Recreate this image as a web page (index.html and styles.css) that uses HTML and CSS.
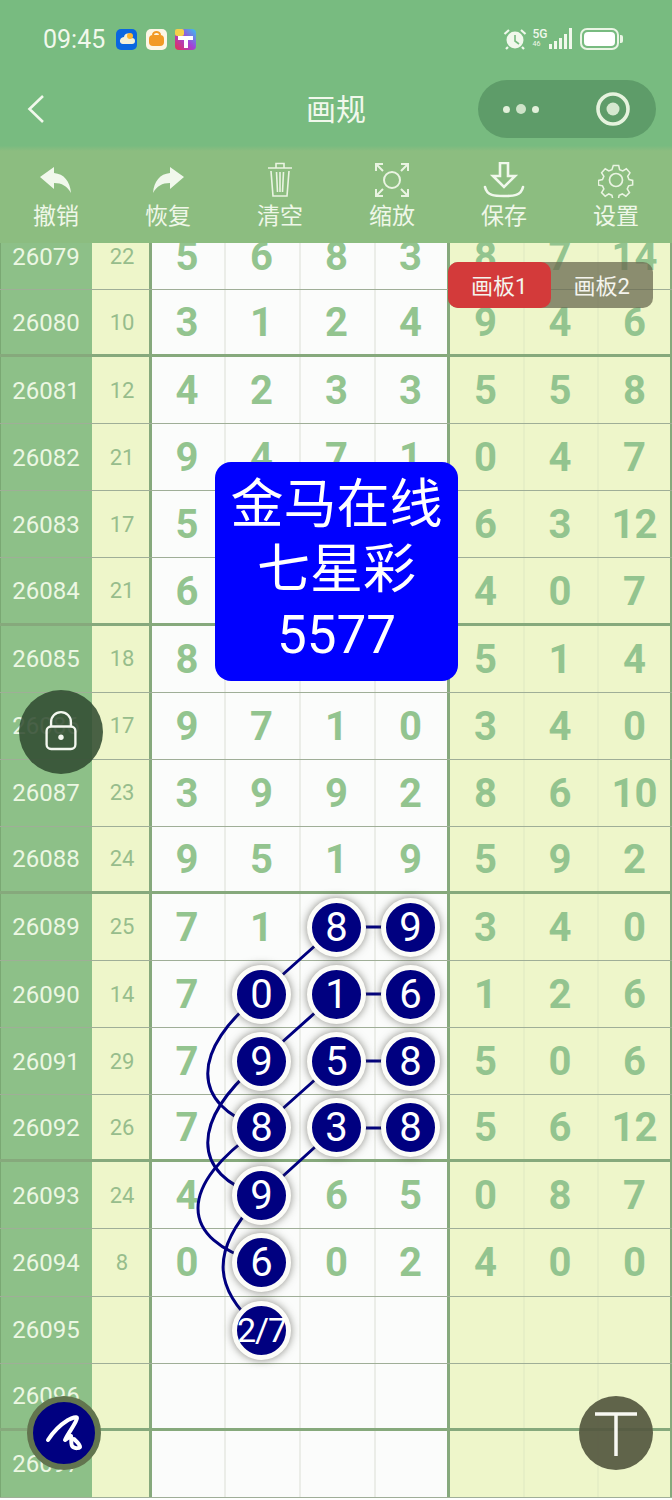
FILE: index.html
```html
<!DOCTYPE html>
<html lang="zh">
<head>
<meta charset="utf-8">
<title>画规</title>
<link rel="stylesheet" href="styles.css">
</head>
<body>
<div class="page">
  <header class="head">
    <div class="status">
      <span class="time">09:45</span>
      <svg class="app" viewBox="0 0 21 21"><rect width="21" height="21" rx="5" fill="#0a66e0"/><path d="M4 13a4 4 0 0 1 4-5 4 4 0 0 1 8 1 3 3 0 0 1 0 6H7a3 3 0 0 1-3-2z" fill="#f4f0d8"/><circle cx="14" cy="7" r="3" fill="#ffb52e"/></svg>
      <svg class="app" viewBox="0 0 21 21"><rect width="21" height="21" rx="5" fill="#fdf6e6"/><rect x="3" y="6" width="15" height="11" rx="4" fill="#f29a26"/><path d="M7 6a3.5 3 0 0 1 7 0" fill="none" stroke="#f29a26" stroke-width="2"/></svg>
      <svg class="app" viewBox="0 0 21 21"><defs><linearGradient id="mc" x1="0" y1="1" x2="1" y2="0"><stop offset="0" stop-color="#e8304f"/><stop offset=".5" stop-color="#a342d8"/><stop offset="1" stop-color="#36c3ee"/></linearGradient></defs><rect width="21" height="21" rx="4" fill="url(#mc)"/><rect x="0" y="0" width="9" height="7" rx="2" fill="#f4d04a"/><path d="M3 7h15v4h-5v8H9v-8H3z" fill="#fff"/></svg>
      <span class="spacer"></span>
      <svg class="alarm" viewBox="0 0 24 22"><circle cx="12" cy="12" r="8.5" fill="#f1f8ec"/><path d="M12 7v6l4 3" stroke="#78bb80" stroke-width="1.6" fill="none"/><path d="M1.5 6 6 2M22.5 6 18 2M5 19l-2 2M19 19l2 2" stroke="#f1f8ec" stroke-width="2.2" fill="none"/></svg>
      <span class="net"><span class="net-g">5G</span><span class="net-s">46</span></span>
      <span class="bars"><i class="b1"></i><i class="b2"></i><i class="b3"></i><i class="b4"></i><i class="b5"></i></span>
      <span class="battery"><span class="batt-fill"></span></span><span class="batt-cap"></span>
    </div>
    <nav class="nav">
      <svg class="back" viewBox="0 0 18 28"><path d="M16 1 2.5 14 16 27" fill="none" stroke="#f1f8ec" stroke-width="2.6"/></svg>
      <h1 class="title">画规</h1>
      <div class="capsule">
        <span class="dots"><i></i><i class="big"></i><i></i></span>
        <svg class="target" viewBox="0 0 36 36"><circle cx="18" cy="18" r="15" fill="none" stroke="#e6f3de" stroke-width="3.6"/><circle cx="18" cy="18" r="6.5" fill="#d5e8cf"/></svg>
      </div>
    </nav>
  </header>

  <section class="tools">
    <div class="tool">
      <svg class="ticon" viewBox="0 0 36 36"><path d="M2 15 16 5v6c10 1 16 8 17 20-4-7-9-10-17-10v6z" fill="#f1f8ec"/></svg>
      <span>撤销</span>
    </div>
    <div class="tool">
      <svg class="ticon" viewBox="0 0 36 36"><path d="M34 15 20 5v6C10 12 4 19 3 31c4-7 9-10 17-10v6z" fill="#f1f8ec"/></svg>
      <span>恢复</span>
    </div>
    <div class="tool">
      <svg class="ticon" viewBox="0 0 36 36" fill="none" stroke="#eaf4e2" stroke-width="1.6"><path d="M6 6h24M9 9l2 25h14l2-25M14 6V1.500h8V6M14.500 10l1 20M18 10v20M21.500 10l-1 20"/></svg>
      <span>清空</span>
    </div>
    <div class="tool">
      <svg class="ticon" viewBox="0 0 36 36" fill="none" stroke="#eaf4e2" stroke-width="2"><circle cx="18" cy="18" r="8"/><path d="M2 9V2h7M2 2l7 7M27 2h7v7M34 2l-7 7M2 27v7h7M2 34l7-7M34 27v7h-7M34 34l-7-7"/></svg>
      <span>缩放</span>
    </div>
    <div class="tool">
      <svg class="ticon wide" viewBox="0 0 42 36" fill="none" stroke="#f1f8ec" stroke-width="2.600"><path d="M17 1h8v13h7L21 25 10 14h7z"/><path d="M2 25c2 9 10 9 19 9s17 0 19-9" stroke-linecap="round"/></svg>
      <span>保存</span>
    </div>
    <div class="tool">
      <svg class="ticon" viewBox="0 0 36 36" fill="none" stroke="#eaf4e2" stroke-width="1.700"><circle cx="18" cy="18" r="6.500"/><path d="M15 2h6l1 4.500 3.500 1.500 4-2.500 4 4.500-2.500 4 1.500 3.500 4 1v-0 5l-4.500 1-1.500 3.500 2.500 4-4 4-4-2.500-3.500 1.500-1 4.500h-6l-1-4.500-3.500-1.500-4 2.500-4-4 2.500-4-1.500-3.500-4.500-1v-5l4.500-1 1.500-3.500-2.500-4 4-4.500 4 2.500 3.500-1.500z" transform="translate(1.800 1.800) scale(.9)"/></svg>
      <span>设置</span>
    </div>
  </section>

  <main class="board">
    <div class="rows">
      <div class="row"><div class="id">26079</div><div class="sum">22</div><div class="n first">5</div><div class="n">6</div><div class="n">8</div><div class="n last">3</div><div class="n r">8</div><div class="n r">7</div><div class="n r">14</div></div>
      <div class="row major"><div class="id">26080</div><div class="sum">10</div><div class="n first">3</div><div class="n">1</div><div class="n">2</div><div class="n last">4</div><div class="n r">9</div><div class="n r">4</div><div class="n r">6</div></div>
      <div class="row"><div class="id">26081</div><div class="sum">12</div><div class="n first">4</div><div class="n">2</div><div class="n">3</div><div class="n last">3</div><div class="n r">5</div><div class="n r">5</div><div class="n r">8</div></div>
      <div class="row"><div class="id">26082</div><div class="sum">21</div><div class="n first">9</div><div class="n">4</div><div class="n">7</div><div class="n last">1</div><div class="n r">0</div><div class="n r">4</div><div class="n r">7</div></div>
      <div class="row"><div class="id">26083</div><div class="sum">17</div><div class="n first">5</div><div class="n"></div><div class="n"></div><div class="n last"></div><div class="n r">6</div><div class="n r">3</div><div class="n r">12</div></div>
      <div class="row major"><div class="id">26084</div><div class="sum">21</div><div class="n first">6</div><div class="n"></div><div class="n"></div><div class="n last"></div><div class="n r">4</div><div class="n r">0</div><div class="n r">7</div></div>
      <div class="row"><div class="id">26085</div><div class="sum">18</div><div class="n first">8</div><div class="n"></div><div class="n"></div><div class="n last"></div><div class="n r">5</div><div class="n r">1</div><div class="n r">4</div></div>
      <div class="row"><div class="id">26086</div><div class="sum">17</div><div class="n first">9</div><div class="n">7</div><div class="n">1</div><div class="n last">0</div><div class="n r">3</div><div class="n r">4</div><div class="n r">0</div></div>
      <div class="row"><div class="id">26087</div><div class="sum">23</div><div class="n first">3</div><div class="n">9</div><div class="n">9</div><div class="n last">2</div><div class="n r">8</div><div class="n r">6</div><div class="n r">10</div></div>
      <div class="row major"><div class="id">26088</div><div class="sum">24</div><div class="n first">9</div><div class="n">5</div><div class="n">1</div><div class="n last">9</div><div class="n r">5</div><div class="n r">9</div><div class="n r">2</div></div>
      <div class="row"><div class="id">26089</div><div class="sum">25</div><div class="n first">7</div><div class="n">1</div><div class="n"><span class="ball">8</span></div><div class="n last"><span class="ball">9</span></div><div class="n r">3</div><div class="n r">4</div><div class="n r">0</div></div>
      <div class="row"><div class="id">26090</div><div class="sum">14</div><div class="n first">7</div><div class="n"><span class="ball">0</span></div><div class="n"><span class="ball">1</span></div><div class="n last"><span class="ball">6</span></div><div class="n r">1</div><div class="n r">2</div><div class="n r">6</div></div>
      <div class="row"><div class="id">26091</div><div class="sum">29</div><div class="n first">7</div><div class="n"><span class="ball">9</span></div><div class="n"><span class="ball">5</span></div><div class="n last"><span class="ball">8</span></div><div class="n r">5</div><div class="n r">0</div><div class="n r">6</div></div>
      <div class="row major"><div class="id">26092</div><div class="sum">26</div><div class="n first">7</div><div class="n"><span class="ball">8</span></div><div class="n"><span class="ball">3</span></div><div class="n last"><span class="ball">8</span></div><div class="n r">5</div><div class="n r">6</div><div class="n r">12</div></div>
      <div class="row"><div class="id">26093</div><div class="sum">24</div><div class="n first">4</div><div class="n"><span class="ball">9</span></div><div class="n">6</div><div class="n last">5</div><div class="n r">0</div><div class="n r">8</div><div class="n r">7</div></div>
      <div class="row"><div class="id">26094</div><div class="sum">8</div><div class="n first">0</div><div class="n"><span class="ball">6</span></div><div class="n">0</div><div class="n last">2</div><div class="n r">4</div><div class="n r">0</div><div class="n r">0</div></div>
      <div class="row"><div class="id">26095</div><div class="sum"></div><div class="n first"></div><div class="n"><span class="ball small">2/7</span></div><div class="n"></div><div class="n last"></div><div class="n r"></div><div class="n r"></div><div class="n r"></div></div>
      <div class="row major"><div class="id">26096</div><div class="sum"></div><div class="n first"></div><div class="n"></div><div class="n"></div><div class="n last"></div><div class="n r"></div><div class="n r"></div><div class="n r"></div></div>
      <div class="row"><div class="id">26097</div><div class="sum"></div><div class="n first"></div><div class="n"></div><div class="n"></div><div class="n last"></div><div class="n r"></div><div class="n r"></div><div class="n r"></div></div>
    </div>
    <svg class="links" viewBox="0 243 672 1257" fill="none" stroke="#000080" stroke-width="3">
      <path d="M336 927 261 994M336 994 261 1061M336 1061 261 1128M336 1128 261 1196"/>
      <path d="M336 927H410M336 994H410M336 1061H410M336 1128H410"/>
      <path d="M261 994C190 1050 190 1105 261 1128"/>
      <path d="M261 1061C190 1120 190 1175 261 1196"/>
      <path d="M261 1128C177 1185 177 1240 261 1263"/>
      <path d="M261 1196C208 1250 213 1290 261 1330"/>
    </svg>
  </main>

  <aside class="notice">金马在线<br>七星彩<br>5577</aside>
  <div class="tabs"><span class="tab on">画板1</span><span class="tab">画板2</span></div>
  <button class="fab lock"><svg viewBox="0 0 40 46" fill="none" stroke="#f4f8f0" stroke-width="2.600"><path d="M9 18V13a11 11 0 0 1 22 0v5"/><rect x="4" y="18" width="32" height="25" rx="5"/><circle cx="20" cy="30" r="3" fill="#f4f8f0" stroke="none"/></svg></button>
  <button class="fab pen"><svg viewBox="0 0 62 62" fill="none" stroke="#fff" stroke-width="4" stroke-linecap="round" stroke-linejoin="round"><path d="M15 38C20 30 27 23 35 18 39 16 44 14 44 16 44 20 35 31 32 38 35 36 37 34 38 34 39 37 37 43 40 45 43 47 46 46 47 45 47 42 43 39 41 37"/></svg></button>
  <button class="fab text"><svg viewBox="0 0 74 74" fill="none" stroke="#f8f8f2" stroke-width="3.500"><path d="M16 18H58M37 18V60"/></svg></button>
</div>
</body>
</html>
```
FILE: styles.css
```css
* { box-sizing: border-box; }
html, body { margin: 0; padding: 0; }
body { font-family: Roboto, "Noto Sans CJK SC", sans-serif; background: #fff; }
.page { position: relative; width: 672px; height: 1500px; overflow: hidden; display: flex; flex-direction: column; }

.head { height: 146px; background: #78bb80; color: #f1f8ec; flex: none; }
.status { height: 72px; padding: 6px 49px 0 43px; display: flex; align-items: center; }
.time { font-size: 25px; margin-right: 8px; width: 65px; }
.app { width: 21px; height: 21px; margin-right: 8.500px; }
.spacer { flex: 1; }
.alarm { width: 24px; height: 22px; margin-right: 6px; }
.net { width: 16px; display: flex; flex-direction: column; line-height: 1; margin-top: -2px; }
.net-g { font-size: 12px; font-weight: 500; }
.net-s { font-size: 7px; margin-top: 1px; }
.bars { display: flex; align-items: flex-end; gap: 1.500px; height: 21px; margin-right: 8px; margin-top: -2px; }
.bars i { display: block; width: 3.500px; background: #f1f8ec; }
.b1 { height: 5px; } .b2 { height: 8px; } .b3 { height: 11px; } .b4 { height: 15px; } .b5 { height: 21px; }
.battery { width: 39px; height: 22px; border: 2px solid #eaf5e4; border-radius: 7px; padding: 2px; display: flex; }
.batt-fill { flex: 1; background: #fff; border-radius: 4px; }
.batt-cap { width: 3px; height: 8px; background: #eaf5e4; border-radius: 0 2px 2px 0; margin-left: 1px; }

.nav { height: 74px; display: grid; grid-template-columns: 1fr auto 1fr; align-items: center; padding: 0 16px; }
.back { width: 18px; height: 28px; margin-left: 11px; }
.title { margin: 0; font-size: 30px; line-height: 34px; font-weight: 400; color: #f1f8ec; margin-top: 2px; }
.capsule { justify-self: end; width: 178px; height: 58px; border-radius: 29px; background: #5e9c69; display: flex; align-items: center; padding: 0 0 0 25px; }
.dots { display: flex; align-items: center; gap: 6px; width: 92px; }
.dots i { display: block; width: 7px; height: 7px; border-radius: 50%; background: #e2f0da; }
.dots i.big { width: 10px; height: 10px; background: #cfe3c9; }
.target { width: 36px; height: 36px; }

.tools { height: 97px; flex: none; display: grid; grid-template-columns: repeat(6, 112px); background: linear-gradient(#79bb80 0, #8cbd80 5px); padding-top: 16px; }
.tool { display: flex; flex-direction: column; align-items: center; color: #eff7e8; font-size: 23px; line-height: 34px; gap: 2px; }
.ticon { width: 36px; height: 36px; display: block; }
.ticon.wide { width: 42px; }

.board { position: relative; flex: 1; overflow: hidden; background: #fff; }
.rows { margin-top: -20px; }
.row { display: grid; grid-template-columns: 92px 60px 72px 75px 75px 76px 73px 74px 75px; height: 67.100px; border-bottom: 1.500px solid #9fae97; }
.row.major { border-bottom: 3px solid #86a97c; }
.id { background: #8dc088; color: #ecf7e3; font-size: 24px; display: flex; align-items: center; justify-content: center; padding: 1px 1px 0 0; border-left: 1px solid #7aa873; }
.sum { background: #eef6ca; color: #97bd8c; font-size: 22px; display: flex; align-items: center; justify-content: center; border-right: 3px solid #86a97c; padding-left: 3px; }
.n { background: #fbfcfb; color: #93c48f; font-size: 40px; font-weight: 700; display: flex; align-items: center; justify-content: center; border-left: 2px solid #ebede8; padding: 1px 2px 0 0; }
.n.first { border-left: 0; }
.n.last { border-right: 3px solid #86a97c; }
.n.r { background: #eef6ca; border-left: 2px solid #e6efc6; }
.n.last + .n.r { border-left: 0; }
.n.r:last-child { border-right: 2px solid #86a97c; padding-right: 0; }

.ball { position: relative; z-index: 2; width: 59px; height: 59px; flex: none; border-radius: 50%; border: 5.500px solid #fcfcf8; background: #000080; color: #fff; font-size: 40px; font-weight: 400; display: flex; align-items: center; justify-content: center; box-shadow: 0 0 8px rgba(60, 60, 50, .6); }
.ball.small { font-size: 34px; letter-spacing: -1px; white-space: nowrap; }
.links { position: absolute; left: 0; top: 0; width: 672px; height: 1257px; z-index: 1; }

.notice { position: absolute; left: 215px; top: 462px; width: 243px; height: 219px; z-index: 3; border-radius: 16px; background: #0000ff; color: #fff; font-size: 53px; line-height: 65px; text-align: center; padding-top: 11px; }
.tabs { position: absolute; left: 448px; top: 262px; width: 205px; height: 46px; z-index: 3; display: flex; border-radius: 10px; background: rgba(105, 105, 80, .75); font-size: 22px; color: #f4f4ee; }
.tab { flex: 1; display: flex; align-items: center; justify-content: center; border-radius: 10px; padding-bottom: 3px; }
.tab.on { background: #d33a3a; }

.fab { position: absolute; z-index: 4; border: 0; padding: 0; border-radius: 50%; display: flex; align-items: center; justify-content: center; }
.lock { left: 19px; top: 690px; width: 84px; height: 84px; background: rgba(48, 75, 48, .87); }
.lock svg { width: 36px; height: 42px; margin-top: -2px; }
.pen { left: 27px; top: 1396px; width: 74px; height: 74px; background: #000080; border: 6px solid #62754f; }
.pen svg { width: 62px; height: 62px; }
.text { left: 579px; top: 1396px; width: 74px; height: 74px; background: rgba(85, 88, 65, .93); }
.text svg { width: 74px; height: 74px; }
```
